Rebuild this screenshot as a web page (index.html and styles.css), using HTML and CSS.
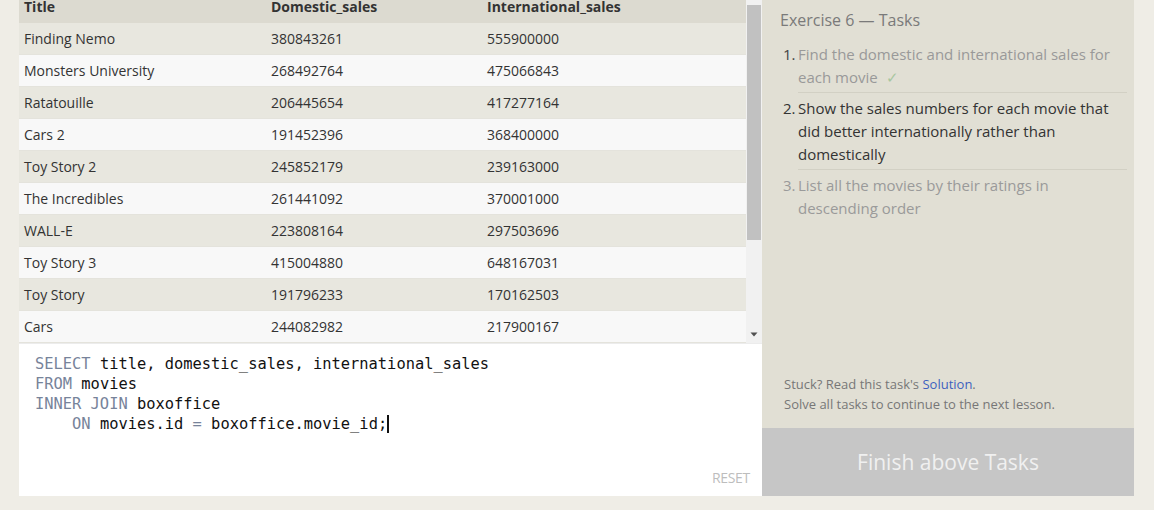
FILE: index.html
```html
<!DOCTYPE html>
<html>
<head>
<meta charset="utf-8">
<link rel="stylesheet" href="styles.css">
</head>
<body>
<div class="page">
  <div class="left">
    <div class="results">
      <div class="table-clip">
        <table class="data">
          <thead>
            <tr><th class="c1">Title</th><th class="c2">Domestic_sales</th><th>International_sales</th></tr>
          </thead>
          <tbody>
            <tr><td>Finding Nemo</td><td>380843261</td><td>555900000</td></tr>
            <tr><td>Monsters University</td><td>268492764</td><td>475066843</td></tr>
            <tr><td>Ratatouille</td><td>206445654</td><td>417277164</td></tr>
            <tr><td>Cars 2</td><td>191452396</td><td>368400000</td></tr>
            <tr><td>Toy Story 2</td><td>245852179</td><td>239163000</td></tr>
            <tr><td>The Incredibles</td><td>261441092</td><td>370001000</td></tr>
            <tr><td>WALL-E</td><td>223808164</td><td>297503696</td></tr>
            <tr><td>Toy Story 3</td><td>415004880</td><td>648167031</td></tr>
            <tr><td>Toy Story</td><td>191796233</td><td>170162503</td></tr>
            <tr><td>Cars</td><td>244082982</td><td>217900167</td></tr>
          </tbody>
        </table>
      </div>
      <div class="scrollbar">
        <div class="thumb"></div>
        <div class="track-rest"></div>
        <div class="arrow"><svg width="8" height="5" viewBox="0 0 8 5"><path d="M0.5 0.5 L7.5 0.5 L4 4.5 Z" fill="#505050"/></svg></div>
      </div>
    </div>
    <div class="editor">
      <pre class="code"><span class="kw">SELECT</span> title, domestic_sales, international_sales
<span class="kw">FROM</span> movies
<span class="kw">INNER JOIN</span> boxoffice
    <span class="kw">ON</span> movies.id <span class="kw">=</span> boxoffice.movie_id;<span class="caret"></span></pre>
      <div class="reset">RESET</div>
    </div>
  </div>
  <div class="right">
    <div class="tasks">
      <div class="ex-title">Exercise 6 — Tasks</div>
      <ol class="task-list">
        <li class="done"><span class="num">1.</span><span class="txt">Find the domestic and international sales for each movie <span class="check">✓</span></span></li>
        <li class="active"><span class="num">2.</span><span class="txt">Show the sales numbers for each movie that did better internationally rather than domestically</span></li>
        <li class="todo"><span class="num">3.</span><span class="txt">List all the movies by their ratings in descending order</span></li>
      </ol>
    </div>
    <div class="help">
      <div>Stuck? Read this task's <span class="link">Solution</span>.</div>
      <div>Solve all tasks to continue to the next lesson.</div>
    </div>
    <div class="finish">Finish above Tasks</div>
  </div>
</div>
</body>
</html>
```
FILE: styles.css
```css
html, body {
  margin: 0;
  padding: 0;
  background: #efede6;
  font-family: "Open Sans", "Liberation Sans", sans-serif;
}
.page {
  display: flex;
  width: 1154px;
  height: 510px;
  box-sizing: border-box;
  padding: 0 20px 14px 19px;
}
.left {
  width: 743px;
  display: flex;
  flex-direction: column;
}
.results {
  height: 344px;
  display: flex;
  background: #f8f8f8;
  border-bottom: 1px solid #ececec;
  box-sizing: border-box;
}
.table-clip {
  width: 727px;
  overflow: hidden;
}
.data {
  width: 100%;
  border-collapse: collapse;
  margin-top: -10px;
  font-size: 14px;
  color: #333;
}
.data th {
  text-align: left;
  height: 33px;
  padding: 0 5px;
  background: #dcdad0;
  color: #333;
  font-weight: 700;
  font-size: 14px;
}
.data th.c1, .data td:first-child { width: 237px; }
.data th.c2, .data td:nth-child(2) { width: 206px; }
.data td {
  height: 31px;
  padding: 0 5px;
  border-bottom: 1px solid #e4e3dc;
}
.data tbody tr:nth-child(odd) td { background: #e8e7df; }
.data tbody tr:nth-child(even) td { background: #f8f8f8; }
.scrollbar {
  width: 16px;
  display: flex;
  flex-direction: column;
  align-items: center;
  background: #f1f1f1;
}
.thumb {
  width: 14px;
  height: 235px;
  margin-top: 5px;
  background: #c1c1c1;
}
.track-rest { flex: 1; }
.arrow {
  height: 18px;
  display: flex;
  align-items: center;
  justify-content: center;
}
.editor {
  flex: 1;
  background: #fff;
  position: relative;
}
.code {
  margin: 0;
  padding: 10px 16px;
  font-family: "DejaVu Sans Mono", "Liberation Mono", monospace;
  font-size: 15.4px;
  line-height: 20px;
  color: #111;
}
.kw { color: #77839a; }
.caret {
  display: inline-block;
  width: 2px;
  height: 18px;
  background: #111;
  vertical-align: -4px;
}
.reset {
  position: absolute;
  right: 12px;
  bottom: 9px;
  font-size: 14px;
  color: #bdbdbd;
  letter-spacing: -0.3px;
}
.right {
  width: 372px;
  background: #e1dfd4;
  display: flex;
  flex-direction: column;
}
.tasks {
  flex: 1;
  padding: 9px 7px 0 18px;
}
.ex-title {
  font-size: 16px;
  color: #7a7a7a;
  line-height: 22px;
  margin-bottom: 12px;
}
.task-list {
  list-style: none;
  margin: 0;
  padding: 0;
}
.task-list li {
  display: flex;
  font-size: 15px;
  line-height: 23px;
}
.task-list li + li {
  padding-top: 4px;
}
.task-list li .num {
  width: 18px;
  box-sizing: border-box;
  padding-left: 3px;
  text-align: left;
  flex: none;
}
.task-list li .txt {
  flex: 1;
  padding-bottom: 3px;
}
.task-list li.done .txt, .task-list li.active .txt { border-bottom: 1px solid #d2d0c4; }
.task-list li.done .num { color: #444; }
.task-list li.done .txt { color: #999; }
.task-list li.active { color: #333; }
.task-list li.todo { color: #9a9a9a; }
.check { color: #a8c6a0; margin-left: 4px; }
.help {
  padding: 0 0 14px 22px;
  font-size: 13px;
  line-height: 20px;
  color: #777;
}
.link { color: #3d5fbf; }
.finish {
  height: 68px;
  background: #c6c6c6;
  color: #f0f0f0;
  font-size: 21px;
  display: flex;
  align-items: center;
  justify-content: center;
}
```
